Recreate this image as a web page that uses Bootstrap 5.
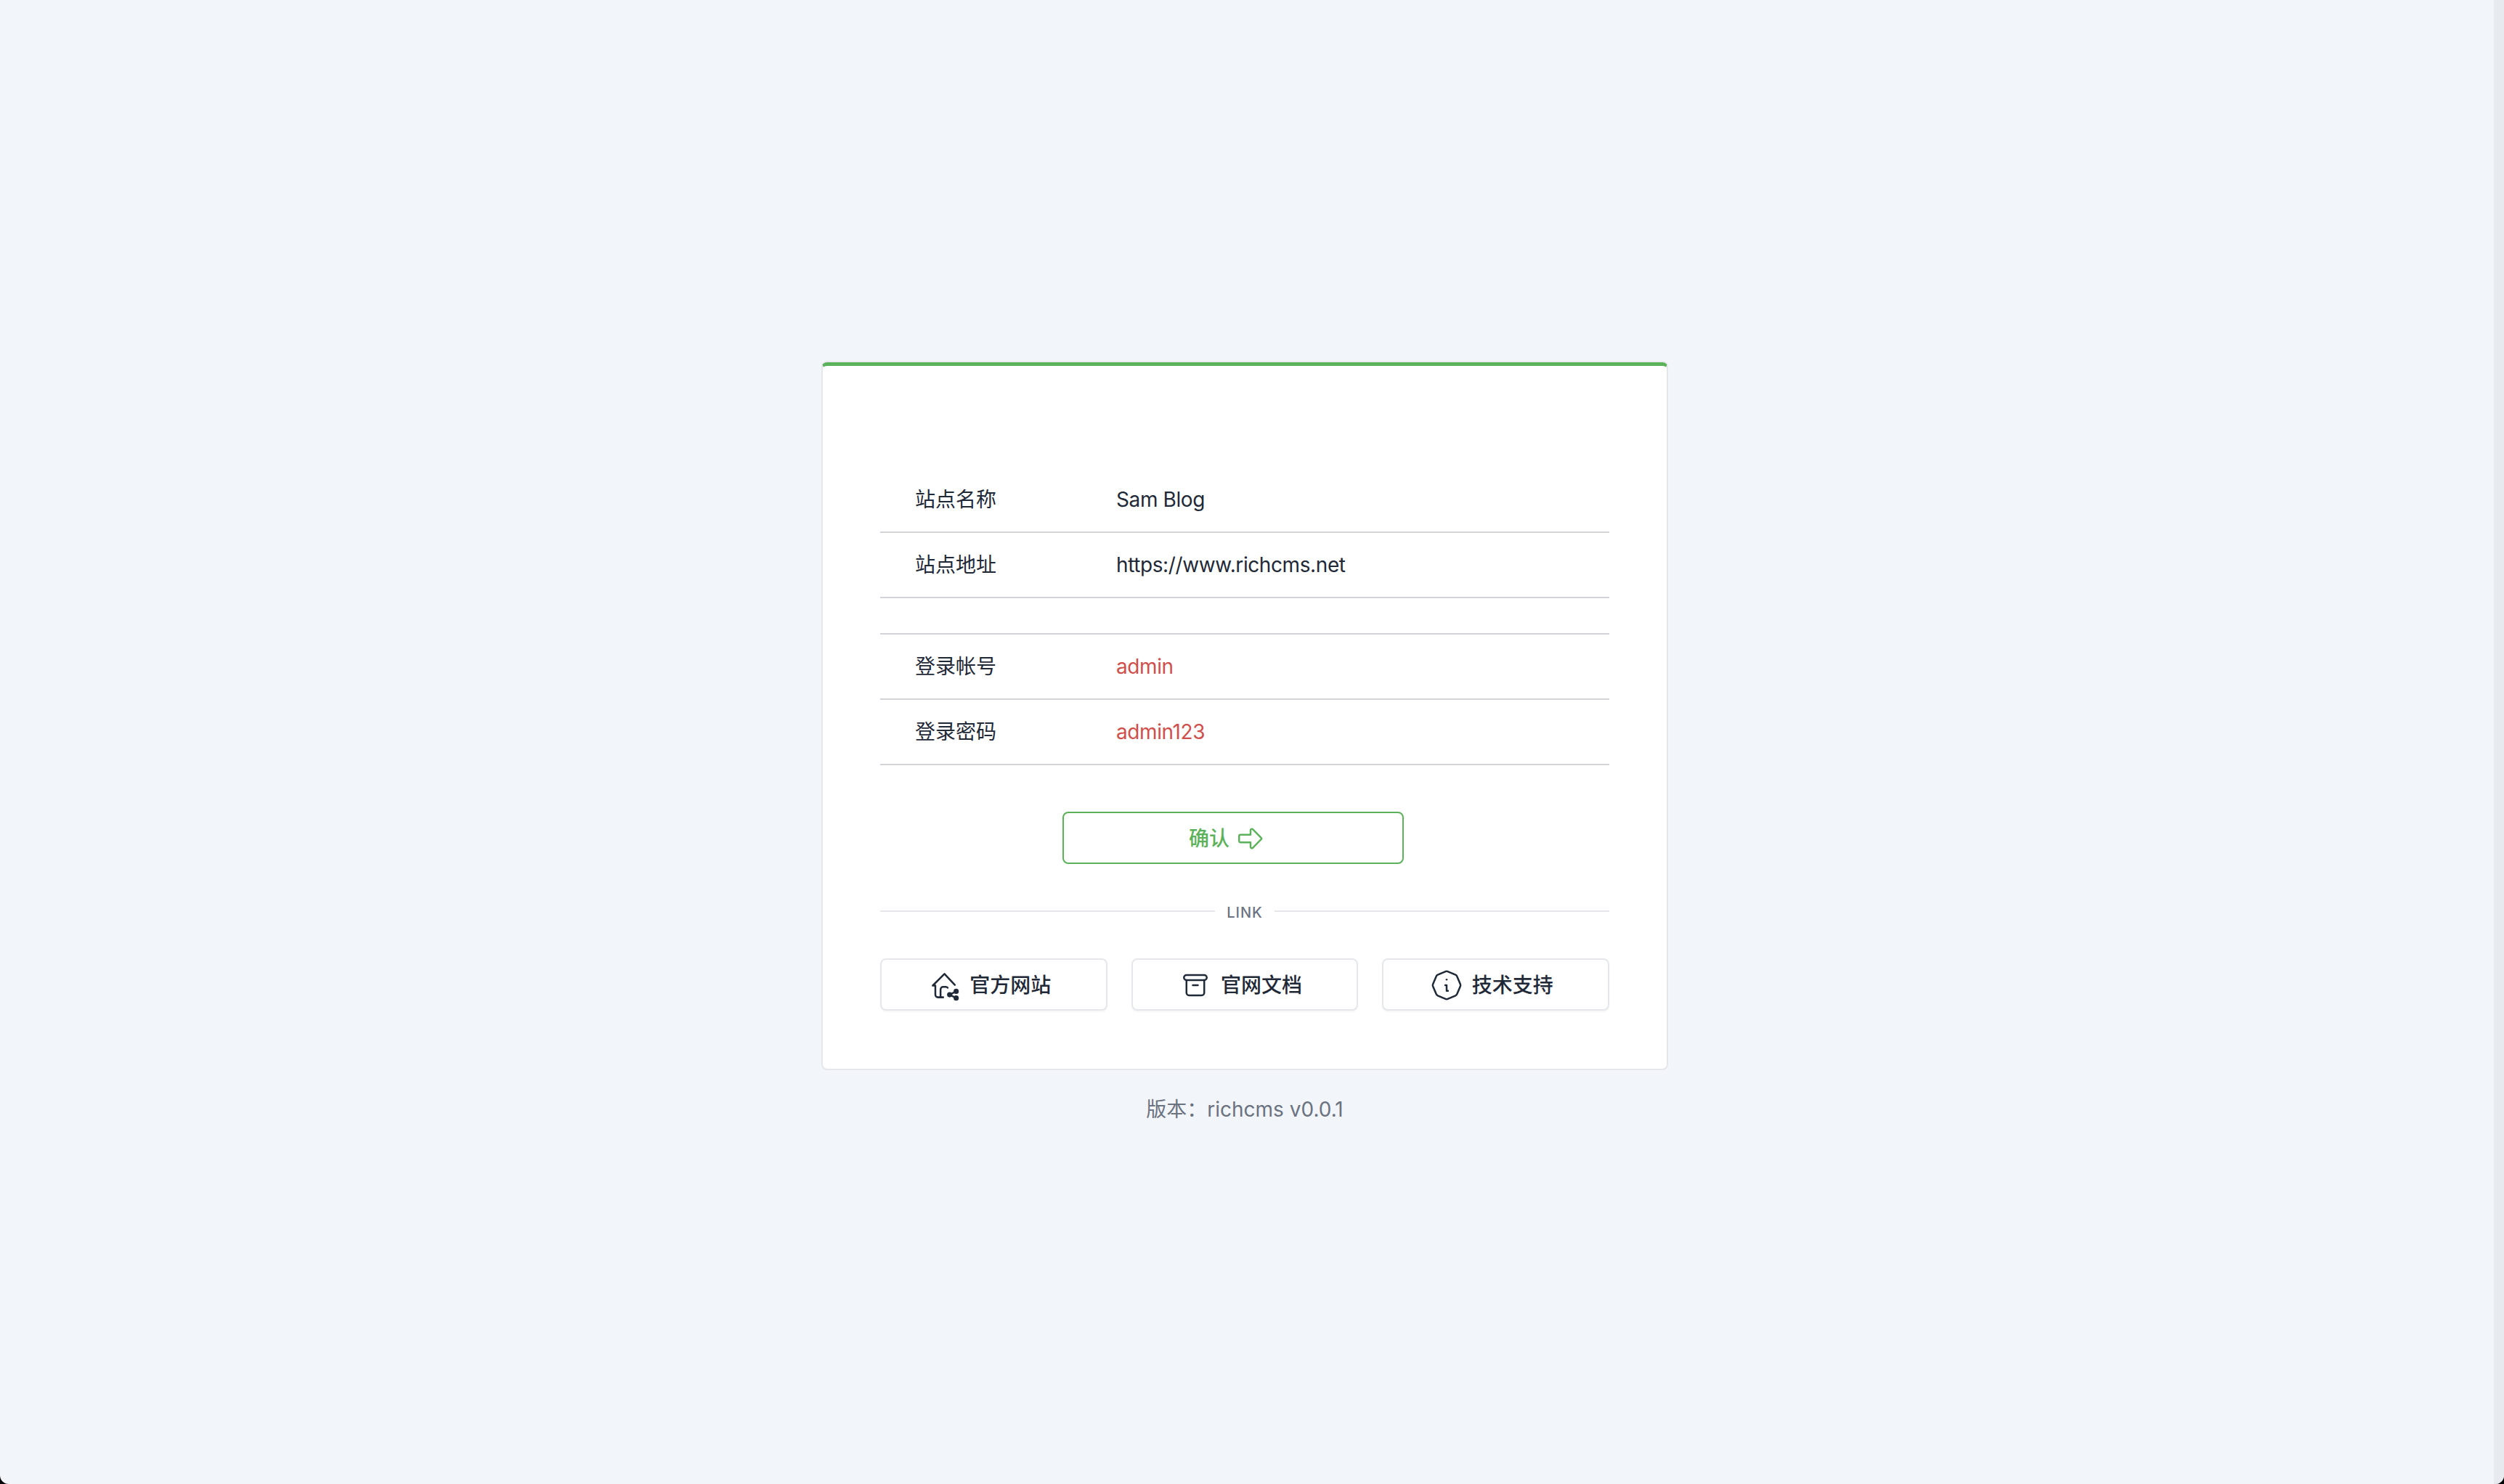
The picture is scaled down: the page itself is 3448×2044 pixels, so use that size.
<!DOCTYPE html>
<html lang="zh-CN">
<head>
    <meta charset="UTF-8">
    <meta name="viewport" content="width=device-width, initial-scale=1.0">
    <title>安装完成</title>
    <link rel="stylesheet" href="https://cdn.jsdelivr.net/npm/bootstrap@5.3.0/dist/css/bootstrap.min.css" />
    <script src="https://cdn.jsdelivr.net/npm/bootstrap@5.3.0/dist/js/bootstrap.bundle.min.js"></script>
    <style>
        html, body { height: 100%; }
        body {
            background: #000;
            font-family: Inter, "Noto Sans CJK SC", sans-serif;
            font-size: 28px;
            color: #1f2937;
            overflow: hidden;
        }
        .screen { height: 2044px; border-radius: 0 0 12px 12px; overflow: hidden; background: #f2f5fa; }
        .page-main { padding: 499px 6px 0 0; }
        .side-band { width: 14px; background: #e7eaee; }
        .install-card {
            width: 1166px;
            background: #fff;
            border: 2px solid #e5e7eb;
            border-top: 5px solid #5cb25a;
            border-radius: 8px;
            box-shadow: 0 -2px 0 #e8eaef;
        }
        .card-inner { padding: 139px 79px 80px; }
        .info-table { margin: 0; color: #1f2937; }
        .info-table td {
            height: 90px;
            padding: 0;
            vertical-align: middle;
            border-bottom: 2px solid #d2d3d8;
            box-shadow: none;
            background: transparent;
            color: inherit;
        }
        .info-table td.key { width: 325px; padding-left: 48px; }
        .info-table td.val { letter-spacing: -.4px; }
        .info-table tr.spacer td { height: 50px; }
        .info-table td.red { color: #cf4f4c; }
        .confirm-btn {
            width: 470px;
            height: 72px;
            margin: 64px 0 0 251px;
            font-size: 28px;
            font-weight: 500;
            color: #5cb25a;
            background: #fff;
            border: 2px solid #5cb25a;
            border-radius: 8px;
            padding: 2px 16px 0 0;
        }
        .confirm-btn svg { width: 42px; height: 42px; }
        .link-divider { margin: 54px 0 0; height: 22px; color: #6b7280; font-size: 20px; letter-spacing: 1px; font-weight: 500; }
        .link-divider .rule { height: 2px; background: #e5e7eb; }
        .link-divider span { padding-top: 3px; }
        .link-row { margin-top: 54px; gap: 33px; }
        .link-btn {
            height: 72px;
            font-size: 28px;
            font-weight: 500;
            color: #1f2937;
            background: #fff;
            border: 2px solid #e5e7eb;
            border-radius: 8px;
            box-shadow: 0 2px 2px rgba(0,0,0,.04);
            padding: 2px 12px 0 0;
            gap: 12px;
        }
        .link-btn svg { width: 46px; height: 46px; }
        .link-btn svg.ico-home { width: 43px; height: 43px; margin: 0 1.5px; }
        .link-btn svg.ico-box { width: 42px; height: 42px; margin: 0 2px; }
        .ver-text { margin-top: 33px; color: #6b7280; line-height: 42px; }
    </style>
</head>
<body>
    <div class="screen d-flex">
        <div class="page-main flex-grow-1 d-flex flex-column align-items-center">
            <div class="install-card">
                <div class="card-inner">
                    <table class="table info-table">
                        <tbody>
                            <tr><td class="key">站点名称</td><td class="val">Sam Blog</td></tr>
                            <tr><td class="key">站点地址</td><td class="val">https://www.richcms.net</td></tr>
                            <tr class="spacer"><td colspan="2"></td></tr>
                            <tr><td class="key">登录帐号</td><td class="val red">admin</td></tr>
                            <tr><td class="key">登录密码</td><td class="val red">admin123</td></tr>
                        </tbody>
                    </table>
                    <button type="button" class="btn confirm-btn d-flex align-items-center justify-content-center gap-2">
                        确认
                        <svg viewBox="0 0 24 24" fill="none" stroke="currentColor" stroke-width="1.4" stroke-linecap="round" stroke-linejoin="round"><path d="M4 9h8v-3.586a1 1 0 0 1 1.707 -.707l6.586 6.586a1 1 0 0 1 0 1.414l-6.586 6.586a1 1 0 0 1 -1.707 -.707v-3.586h-8a1 1 0 0 1 -1 -1v-4a1 1 0 0 1 1 -1z"/></svg>
                    </button>
                    <div class="link-divider d-flex align-items-center gap-3">
                        <div class="rule flex-grow-1"></div>
                        <span>LINK</span>
                        <div class="rule flex-grow-1"></div>
                    </div>
                    <div class="link-row d-flex">
                        <a href="#" class="btn link-btn d-flex flex-fill w-100 align-items-center justify-content-center">
                            <svg class="ico-home" viewBox="0 0 24 24" fill="none" stroke="currentColor" stroke-width="1.4" stroke-linecap="round" stroke-linejoin="round"><path d="M20 11.500l-8 -8.500l-9 9h2v7a2 2 0 0 0 2 2h4"/><path d="M9 21v-6a2 2 0 0 1 2 -2h2a2 2 0 0 1 1.500 .7"/><path d="M16 19l5 -2.600M16 19l5 2.600"/><circle cx="16" cy="19" r="1.300" fill="currentColor"/><circle cx="21" cy="16.400" r="1.300" fill="currentColor"/><circle cx="21" cy="21.600" r="1.300" fill="currentColor"/></svg>
                            官方网站
                        </a>
                        <a href="#" class="btn link-btn d-flex flex-fill w-100 align-items-center justify-content-center">
                            <svg class="ico-box" viewBox="0 0 24 24" fill="none" stroke="currentColor" stroke-width="1.4" stroke-linecap="round" stroke-linejoin="round"><path d="M3 6a2 2 0 0 1 2 -2h14a2 2 0 0 1 2 2a2 2 0 0 1 -2 2h-14a2 2 0 0 1 -2 -2z"/><path d="M5 8v10a2 2 0 0 0 2 2h10a2 2 0 0 0 2 -2v-10"/><path d="M10 12h4"/></svg>
                            官网文档
                        </a>
                        <a href="#" class="btn link-btn d-flex flex-fill w-100 align-items-center justify-content-center">
                            <svg viewBox="0 0 24 24" fill="none" stroke="currentColor" stroke-width="1.3" stroke-linecap="round" stroke-linejoin="round"><path d="M12.802 2.165l5.575 2.389c.48 .206 .863 .589 1.07 1.07l2.388 5.574c.22 .512 .22 1.092 0 1.604l-2.389 5.575c-.206 .48 -.589 .863 -1.07 1.07l-5.574 2.388c-.512 .22 -1.092 .22 -1.604 0l-5.575 -2.389a2.036 2.036 0 0 1 -1.07 -1.07l-2.388 -5.574a2.036 2.036 0 0 1 0 -1.604l2.389 -5.575c.206 -.48 .589 -.863 1.07 -1.07l5.574 -2.388a2.036 2.036 0 0 1 1.604 0z"/><path d="M12 8h.01"/><path d="M11 12h1v4h1"/></svg>
                            技术支持
                        </a>
                    </div>
                </div>
            </div>
            <div class="ver-text">版本：richcms v0.0.1</div>
        </div>
        <div class="side-band"></div>
    </div>
</body>
</html>
